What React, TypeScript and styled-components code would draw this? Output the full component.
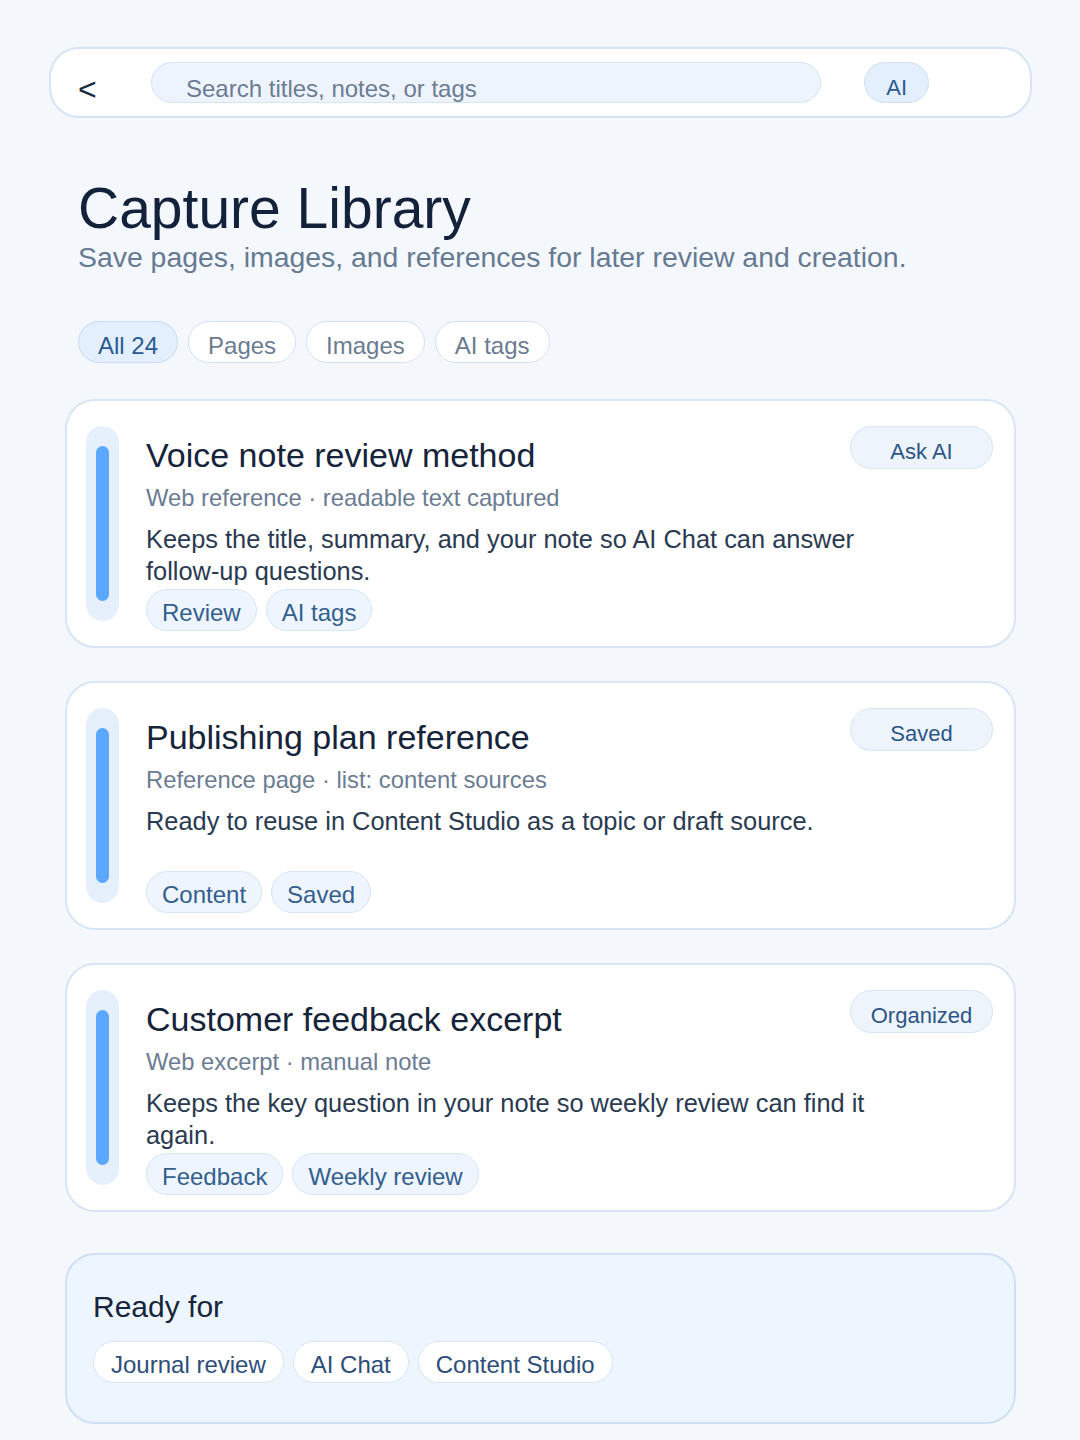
import styled, { createGlobalStyle } from "styled-components";

const GlobalStyle = createGlobalStyle`
  html, body {
    margin: 0;
    background: #f4f8fd;
  }
  body {
    font-family: "Liberation Sans", Arial, sans-serif;
    color: #14233a;
  }
  * {
    box-sizing: border-box;
  }
`;

const Page = styled.div`
  min-height: 1440px;
  padding: 47px 48px 40px 49px;
`;

const TopBar = styled.header`
  height: 71px;
  display: flex;
  align-items: center;
  gap: 43px;
  padding: 0 101px 0 27px;
  background: #ffffff;
  border: 2px solid #d6e4f5;
  border-radius: 30px;
`;

const BackButton = styled.button`
  width: 30px;
  padding: 13px 0 0;
  border: none;
  background: none;
  font-family: inherit;
  font-size: 32px;
  color: #1c2a3f;
  text-align: left;
  cursor: pointer;
`;

const SearchField = styled.input`
  flex: 1;
  height: 41px;
  padding: 12px 0 0 34px;
  border: 1px solid #d6e4f5;
  border-radius: 21px;
  background: #eef4fd;
  font-family: inherit;
  font-size: 24px;
  color: #14233a;
  outline: none;

  &::placeholder {
    color: #6b7c93;
  }
`;

const AiPill = styled.button`
  height: 41px;
  padding: 10px 21px 0;
  border: 1px solid #cfe0f4;
  border-radius: 21px;
  background: #e4effd;
  font-family: inherit;
  font-size: 22px;
  color: #2b5a92;
`;

const Main = styled.main`
  padding: 0 16px;
`;

const Intro = styled.section`
  padding: 59px 13px 0;
`;

const Title = styled.h1`
  margin: 0;
  font-size: 57px;
  font-weight: 400;
  line-height: 1.12;
  color: #13223a;
`;

const Subtitle = styled.p`
  margin: 0;
  font-size: 28.4px;
  color: #667a92;
`;

const FilterRow = styled.div`
  display: flex;
  gap: 10px;
  margin-top: 47px;
`;

const FilterChip = styled.button<{ $active?: boolean }>`
  height: 42px;
  padding: 8px 19px 0;
  border: 1px solid ${(p) => (p.$active ? "#c9dcf3" : "#d3e2f4")};
  border-radius: 21px;
  background: ${(p) => (p.$active ? "#e3effd" : "#ffffff")};
  font-family: inherit;
  font-size: 24px;
  color: ${(p) => (p.$active ? "#2b5a93" : "#6b7b91")};
`;

const CardList = styled.div`
  display: flex;
  flex-direction: column;
  gap: 33px;
  margin-top: 36px;
`;

const Card = styled.article`
  display: flex;
  gap: 27px;
  padding: 25px 21px 15px 19px;
  background: #ffffff;
  border: 2px solid #d8e5f5;
  border-radius: 30px;
`;

const Rail = styled.div`
  flex: none;
  width: 33px;
  height: 195px;
  padding: 20px 10px;
  background: #e6f0fd;
  border-radius: 17px;
`;

const RailBar = styled.div`
  height: 100%;
  background: #5aa8ff;
  border-radius: 7px;
`;

const CardBody = styled.div`
  flex: 1;
  min-width: 0;
`;

const CardHead = styled.div`
  display: flex;
  justify-content: space-between;
  align-items: flex-start;
`;

const CardTitle = styled.h2`
  margin: 0;
  padding-top: 9px;
  font-size: 34px;
  font-weight: 400;
  line-height: 40px;
  color: #15243a;
`;

const ActionButton = styled.button`
  width: 143px;
  height: 43px;
  padding: 9px 0 0;
  border: 1px solid #d6e4f5;
  border-radius: 22px;
  background: #eef4fc;
  font-family: inherit;
  font-size: 22px;
  color: #2c5687;
`;

const Meta = styled.div`
  margin-top: 8px;
  font-size: 23.8px;
  line-height: 30px;
  color: #6b7c93;
`;

const Summary = styled.p`
  max-width: 760px;
  min-height: 64px;
  margin: 10px 0 0;
  font-size: 25.4px;
  line-height: 32px;
  color: #2a3a51;
`;

const TagRow = styled.div`
  display: flex;
  flex-wrap: wrap;
  gap: 9px;
  margin-top: 2px;
`;

const Tag = styled.span<{ $plain?: boolean }>`
  height: 42px;
  padding: 8px 15px 0;
  border: 1px solid #d6e5f6;
  border-radius: 21px;
  background: ${(p) => (p.$plain ? "#ffffff" : "#eef5fe")};
  font-size: 24px;
  line-height: 30px;
  color: ${(p) => (p.$plain ? "#2d4e79" : "#33608f")};
`;

const ReadyPanel = styled.section`
  margin-top: 41px;
  padding: 35px 26px 39px;
  background: #edf5fe;
  border: 2px solid #cfe0f4;
  border-radius: 30px;
`;

const ReadyTitle = styled.h3`
  margin: 0 0 17px;
  font-size: 30px;
  font-weight: 400;
  color: #16253b;
`;

const ReadyChip = styled(Tag)`
  padding: 8px 17px 0;
`;

type Capture = {
  title: string;
  meta: string;
  summary: string;
  action: string;
  tags: string[];
};

const captures: Capture[] = [
  {
    title: "Voice note review method",
    meta: "Web reference · readable text captured",
    summary: "Keeps the title, summary, and your note so AI Chat can answer follow-up questions.",
    action: "Ask AI",
    tags: ["Review", "AI tags"],
  },
  {
    title: "Publishing plan reference",
    meta: "Reference page · list: content sources",
    summary: "Ready to reuse in Content Studio as a topic or draft source.",
    action: "Saved",
    tags: ["Content", "Saved"],
  },
  {
    title: "Customer feedback excerpt",
    meta: "Web excerpt · manual note",
    summary: "Keeps the key question in your note so weekly review can find it again.",
    action: "Organized",
    tags: ["Feedback", "Weekly review"],
  },
];

const filters = ["All 24", "Pages", "Images", "AI tags"];
const destinations = ["Journal review", "AI Chat", "Content Studio"];

export default function App() {
  return (
    <>
      <GlobalStyle />
      <Page>
        <TopBar>
          <BackButton aria-label="Back">&lt;</BackButton>
          <SearchField placeholder="Search titles, notes, or tags" />
          <AiPill>AI</AiPill>
        </TopBar>

        <Main>
          <Intro>
            <Title>Capture Library</Title>
            <Subtitle>Save pages, images, and references for later review and creation.</Subtitle>
            <FilterRow>
              {filters.map((f, i) => (
                <FilterChip key={f} $active={i === 0}>
                  {f}
                </FilterChip>
              ))}
            </FilterRow>
          </Intro>

          <CardList>
            {captures.map((c) => (
              <Card key={c.title}>
                <Rail>
                  <RailBar />
                </Rail>
                <CardBody>
                  <CardHead>
                    <CardTitle>{c.title}</CardTitle>
                    <ActionButton>{c.action}</ActionButton>
                  </CardHead>
                  <Meta>{c.meta}</Meta>
                  <Summary>{c.summary}</Summary>
                  <TagRow>
                    {c.tags.map((t) => (
                      <Tag key={t}>{t}</Tag>
                    ))}
                  </TagRow>
                </CardBody>
              </Card>
            ))}
          </CardList>

          <ReadyPanel>
            <ReadyTitle>Ready for</ReadyTitle>
            <TagRow>
              {destinations.map((d) => (
                <ReadyChip key={d} $plain>
                  {d}
                </ReadyChip>
              ))}
            </TagRow>
          </ReadyPanel>
        </Main>
      </Page>
    </>
  );
}
